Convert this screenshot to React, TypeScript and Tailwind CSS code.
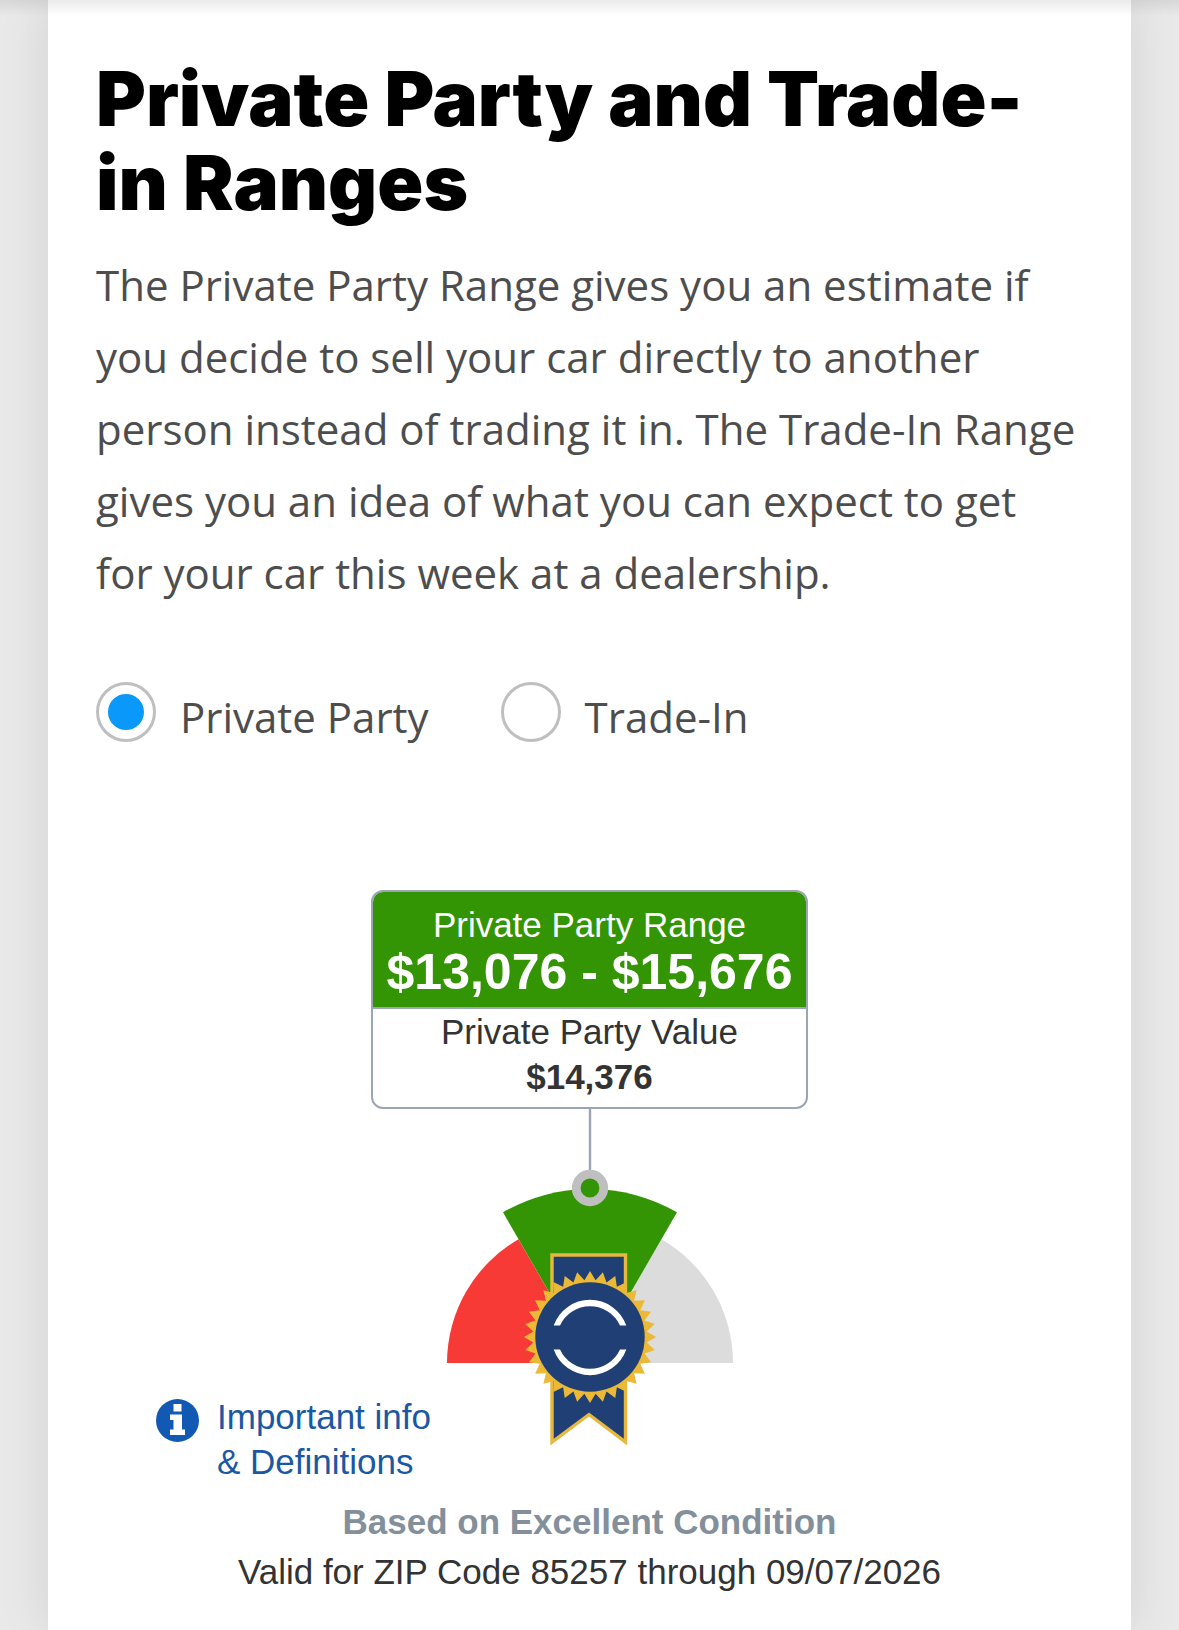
import { useState } from 'react';

type PriceType = 'private' | 'trade';

const OPTIONS: { id: PriceType; label: string }[] = [
  { id: 'private', label: 'Private Party' },
  { id: 'trade', label: 'Trade-In' },
];

const SEAL = { x: 144, y: 228, teeth: 32, outer: 66, inner: 57 };

// Alternates between the outer and inner radius to get the toothed edge
const sealPoints = Array.from({ length: SEAL.teeth * 2 }, (_, i) => {
  const angle = (Math.PI * i) / SEAL.teeth - Math.PI / 2;
  const r = i % 2 === 0 ? SEAL.outer : SEAL.inner;
  return `${(SEAL.x + r * Math.cos(angle)).toFixed(2)},${(SEAL.y + r * Math.sin(angle)).toFixed(2)}`;
}).join(' ');

function Gauge() {
  return (
    <svg width="288" height="338" viewBox="0 0 288 338" role="img" aria-label="Price range gauge">
      <path d="M144 0V64" stroke="#9ca5b4" strokeWidth="2.4" />
      <path d="M144 254H1A143 143 0 0 1 72.5 130.2Z" fill="#f83a37" />
      <path d="M144 254H287A143 143 0 0 0 215.5 130.2Z" fill="#dcdcdc" />
      <path d="M144 254L57 103.3A174 174 0 0 1 231 103.3Z" fill="#339503" />
      <circle cx="144" cy="79" r="13.8" fill="#339503" stroke="#bfbfbf" strokeWidth="8.8" />

      {/* Ribbon */}
      <path d="M106 146H179.500V333L143 305.500L106 333Z" fill="#1f3f75" stroke="#e6b840" strokeWidth="3.4" />
      <polygon points={sealPoints} fill="#ecb936" />
      <circle cx={SEAL.x} cy={SEAL.y} r="54.7" fill="#1f3f75" />
      <path d="M107.700 216.500A38.500 38.500 0 0 1 180.300 216.500H174A33 33 0 0 0 114 216.500Z" fill="#fff" />
      <path d="M107.700 240.500A38.500 38.500 0 0 0 180.300 240.500H174A33 33 0 0 1 114 240.500Z" fill="#fff" />
    </svg>
  );
}

function InfoIcon() {
  return (
    <svg className="mt-[5px] size-[43px]" viewBox="0 0 43 43" aria-hidden="true">
      <circle cx="21.5" cy="21.5" r="21.5" fill="#1259b3" />
      <path d="M17.500 5h8v7.500h-8zM14 15.500h12v15h3V36H14v-5.500h3.500v-9.500H14z" fill="#fff" />
    </svg>
  );
}

export default function App() {
  const [priceType, setPriceType] = useState<PriceType>('private');

  return (
    <div className="relative min-h-screen overflow-hidden bg-[#e9e9e9] px-12">
      <div className="pointer-events-none absolute inset-x-0 top-0 z-10 h-4 bg-linear-to-b from-black/8 to-transparent" />

      <main className="min-h-screen bg-white px-12 pt-14 pb-8 shadow-[0_0_48px_rgba(0,0,0,0.1)]">
        <h1 className="font-[Inter,sans-serif] text-[76px] leading-[84px] font-black text-black">
          Private Party and Trade-in Ranges
        </h1>
        <p className="mt-[25px] font-['Open_Sans',sans-serif] text-[42px] leading-[72px] text-[#4d4d4d]">
          The Private Party Range gives you an estimate if you decide to sell your car directly to
          another person instead of trading it in. The Trade-In Range gives you an idea of what you
          can expect to get for your car this week at a dealership.
        </p>

        <div className="mt-[72px] flex gap-[72px] font-['Open_Sans',sans-serif] text-[42px] leading-[72px] text-[#4d4d4d]">
          {OPTIONS.map((option) => (
            <label key={option.id} className="flex gap-6">
              <input
                type="radio"
                name="price-type"
                checked={priceType === option.id}
                onChange={() => setPriceType(option.id)}
                className="mt-px size-[60px] appearance-none rounded-full border-3 border-[#bfbfbf] bg-clip-content p-[9px] checked:bg-[#0a99fa]"
              />
              {option.label}
            </label>
          ))}
        </div>

        <section className="mt-[137px] font-['Liberation_Sans',sans-serif] text-[35px] leading-[45px] text-[#333]">
          <div className="mx-auto w-fit overflow-hidden rounded-xl border-2 border-[#9ca5b4] text-center">
            <div className="border-b-2 border-[#9ca5b4] bg-[#339503] px-3.5 pt-2.5 pb-2.5 text-white">
              <p>Private Party Range</p>
              <p className="text-[50px] leading-[50px] font-bold">$13,076 - $15,676</p>
            </div>
            <div className="pb-2">
              <p>Private Party Value</p>
              <p className="font-bold">$14,376</p>
            </div>
          </div>

          <div className="grid h-[375px] grid-cols-[1fr_auto_1fr]">
            <a href="#definitions" className="ml-[60px] flex items-start gap-[18px] self-end whitespace-nowrap text-[#1b58a3]">
              <InfoIcon />
              <span>
                Important info
                <br />
                &amp; Definitions
              </span>
            </a>
            <Gauge />
          </div>

          <div className="mt-[13px] text-center leading-[50px]">
            <p className="font-bold text-[#848f9c]">Based on Excellent Condition</p>
            <p>Valid for ZIP Code 85257 through 09/07/2026</p>
          </div>
        </section>
      </main>
    </div>
  );
}
